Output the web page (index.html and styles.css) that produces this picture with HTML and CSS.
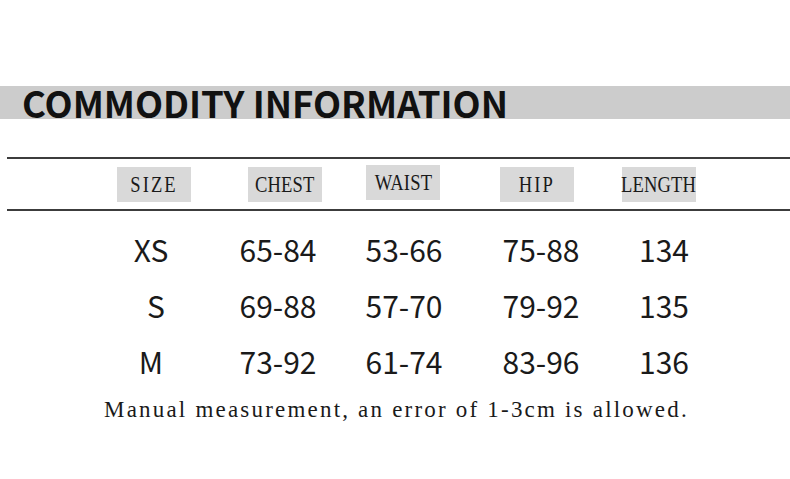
FILE: index.html
```html
<!DOCTYPE html>
<html>
<head>
<meta charset="utf-8">
<link rel="stylesheet" href="styles.css">
</head>
<body>
<div class="page">
  <div class="band"><h1 class="title">COMMODITY INFORMATION</h1></div>
  <div class="thead">
    <div class="hgrid">
      <span class="hbox"><span class="htext wide">SIZE</span></span>
      <span class="hbox"><span class="htext">CHEST</span></span>
      <span class="hbox raised"><span class="htext">WAIST</span></span>
      <span class="hbox"><span class="htext wide">HIP</span></span>
      <span class="hbox"><span class="htext">LENGTH</span></span>
    </div>
  </div>
  <div class="rows">
    <div class="row"><span>XS</span><span>65-84</span><span>53-66</span><span>75-88</span><span>134</span></div>
    <div class="row"><span class="s">S</span><span>69-88</span><span>57-70</span><span>79-92</span><span>135</span></div>
    <div class="row"><span>M</span><span>73-92</span><span>61-74</span><span>83-96</span><span>136</span></div>
  </div>
  <p class="note">Manual measurement, an error of 1-3cm is allowed.</p>
</div>
</body>
</html>
```
FILE: styles.css
```css
html, body {
  margin: 0;
  padding: 0;
  background: #ffffff;
}
.page {
  width: 790px;
  height: 479px;
  overflow: hidden;
  padding-top: 86px;
  box-sizing: border-box;
}
.band {
  height: 33px;
  background: #cccccc;
  display: flex;
  align-items: center;
  padding-left: 22px;
}
.title {
  margin: 0;
  font-family: "Noto Sans CJK SC", "Noto Sans", sans-serif;
  font-weight: 700;
  font-size: 36.5px;
  line-height: 33px;
  color: #111;
  position: relative;
  top: 0px;
}
.thead {
  margin-top: 38px;
  margin-left: 7px;
  border-top: 2px solid #3c3c3c;
  border-bottom: 2px solid #3c3c3c;
  height: 50px;
  box-sizing: content-box;
}
.hgrid {
  display: grid;
  grid-template-columns: 131px 118px 134px 122px 72px;
  padding-left: 110px;
  padding-top: 8px;
}
.hbox {
  width: 74px;
  height: 35px;
  background: #d9d9d9;
  display: flex;
  align-items: center;
  justify-content: center;
  overflow: visible;
}
.htext {
  display: inline-block;
  font-family: "Liberation Serif", serif;
  font-size: 23.5px;
  line-height: 35px;
  letter-spacing: 0.2px;
  color: #1a1a1a;
  white-space: nowrap;
  transform: scaleX(0.79);
}
.htext.wide {
  letter-spacing: 2.6px;
}
.raised {
  margin-top: -2px;
}
.rows {
  margin-top: 10px;
  padding-left: 88px;
}
.row {
  display: grid;
  grid-template-columns: 126px 128px 124px 150px 96px;
  height: 56px;
  font-family: "Noto Sans CJK SC", "Noto Sans", sans-serif;
  font-size: 30px;
  line-height: 56px;
  color: #1a1a1a;
}
.row span {
  text-align: center;
}
.row .s {
  padding-left: 10px;
}
.note {
  margin: 7px 0 0 104px;
  font-family: "Liberation Serif", serif;
  font-size: 23px;
  letter-spacing: 2.2px;
  line-height: 28px;
  color: #1a1a1a;
  white-space: nowrap;
}
```
